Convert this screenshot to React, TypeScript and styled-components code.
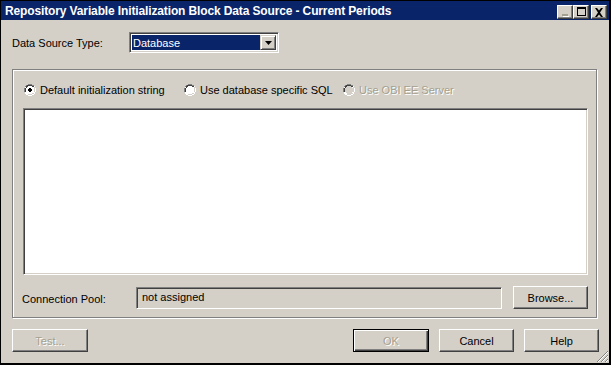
import React from 'react';
import styled, { createGlobalStyle, css } from 'styled-components';

const Global = createGlobalStyle`
  html, body { margin: 0; padding: 0; background: #d4d0c8; }
  body { font-family: "Liberation Sans", Arial, sans-serif; font-size: 11px; color: #000; }
  * { box-sizing: border-box; }
`;

const Window = styled.div`
  position: relative;
  width: 611px;
  height: 365px;
  background: #d4d0c8;
  border: 1px solid #000;
  border-right-width: 2px;
  border-bottom-width: 2px;
  display: flex;
  flex-direction: column;
  overflow: hidden;
`;

const TitleBar = styled.div`
  height: 19px;
  background: #0a246a;
  display: flex;
  align-items: center;
  justify-content: space-between;
  padding: 0 2px 0 4px;
`;

const TitleText = styled.div`
  color: #fff;
  font-weight: bold;
  font-size: 12px;
  letter-spacing: -0.13px;
  white-space: nowrap;
  margin-top: 1px;
`;

const TitleButtons = styled.div`
  display: flex;
  align-items: center;
  margin-top: 3px;
`;

const TitleBtn = styled.div<{ $gap?: boolean }>`
  width: 16px;
  height: 14px;
  background: #d4d0c8;
  border: 1px solid;
  border-color: #fff #404040 #404040 #fff;
  box-shadow: inset -1px -1px 0 #808080;
  display: flex;
  align-items: center;
  justify-content: center;
  margin-left: ${p => (p.$gap ? '2px' : '0')};
`;

const Body = styled.div`
  flex: 1;
  display: flex;
  flex-direction: column;
  padding: 12px 11px 0 11px;
`;

const TopRow = styled.div`
  display: flex;
  align-items: center;
  height: 21px;
`;

const Label = styled.div<{ $w: number }>`
  width: ${p => p.$w}px;
  white-space: nowrap;
`;

const Sunken = css`
  border: 1px solid;
  border-color: #808080 #fff #fff #808080;
  box-shadow: inset 1px 1px 0 #404040, inset -1px -1px 0 #d4d0c8;
`;

const Select = styled.div`
  ${Sunken};
  width: 150px;
  height: 21px;
  background: #fff;
  display: flex;
  padding: 2px;
`;

const SelectValue = styled.div`
  flex: 1;
  background: #0a246a;
  color: #fff;
  padding-left: 1px;
  display: flex;
  align-items: center;
`;

const SelectArrow = styled.div`
  width: 16px;
  height: 15px;
  background: #d4d0c8;
  border: 1px solid;
  border-color: #d4d0c8 #404040 #404040 #d4d0c8;
  box-shadow: inset 1px 1px 0 #fff, inset -1px -1px 0 #808080;
  display: flex;
  align-items: center;
  justify-content: center;
`;

const Group = styled.div`
  margin-top: 16px;
  width: 585px;
  height: 249px;
  border: 1px solid #808080;
  box-shadow: inset 1px 1px 0 #fff, 1px 1px 0 #fff;
  padding: 13px 8px 0 10px;
  display: flex;
  flex-direction: column;
`;

const RadioRow = styled.div`
  display: grid;
  grid-template-columns: 160px 159px 160px;
  height: 13px;
  margin-left: 1px;
`;

const RadioOption = styled.div<{ $disabled?: boolean }>`
  display: flex;
  align-items: center;
  gap: 4px;
  white-space: nowrap;
  color: ${p => (p.$disabled ? '#a4a090' : '#000')};
  text-shadow: ${p => (p.$disabled ? '1px 1px 0 #fff' : 'none')};
`;

const TextArea = styled.div`
  ${Sunken};
  margin-top: 12px;
  width: 565px;
  height: 167px;
  background: #fff;
`;

const PoolRow = styled.div`
  margin-top: 11px;
  height: 23px;
  display: flex;
  align-items: center;
`;

const PoolLabel = styled.div`
  width: 114px;
  margin-left: -1px;
  margin-top: 2px;
  white-space: nowrap;
`;

const Field = styled.div`
  ${Sunken};
  width: 366px;
  height: 22px;
  background: #d4d0c8;
  padding: 3px 5px 0 5px;
  white-space: nowrap;
`;

const Button = styled.div<{ $disabled?: boolean; $default?: boolean; $w?: number }>`
  width: ${p => p.$w ?? 75}px;
  height: 23px;
  background: #d4d0c8;
  display: flex;
  align-items: center;
  justify-content: center;
  white-space: nowrap;
  border: 1px solid;
  ${p =>
    p.$default
      ? css`
          border-color: #000;
          box-shadow: inset 1px 1px 0 #fff, inset -1px -1px 0 #404040, inset -2px -2px 0 #808080;
        `
      : css`
          border-color: #fff #404040 #404040 #fff;
          box-shadow: inset -1px -1px 0 #808080;
        `}
  color: ${p => (p.$disabled ? '#a4a090' : '#000')};
  text-shadow: ${p => (p.$disabled ? '1px 1px 0 #fff' : 'none')};
`;

const BrowseButton = styled(Button)`
  margin-left: 11px;
`;

const ButtonRow = styled.div`
  margin-top: 11px;
  display: flex;
  align-items: center;
  gap: 10px;
  width: 587px;
`;

const Spacer = styled.div`
  flex: 1;
`;

const Grip = styled.svg`
  position: absolute;
  right: 0;
  bottom: 0;
`;

const Radio: React.FC<{ checked?: boolean; disabled?: boolean }> = ({ checked, disabled }) => (
  <svg width="12" height="12" viewBox="0 0 12 12">
    <path d="M4 0h4v1h2v1h1v2h1v4h-1v2h-1v1h-2v1h-4v-1h-2v-1h-1v-2h-1v-4h1v-2h1v-1h2z" fill="#fff" />
    <path d="M4 0h4v1h2v1h-2v-1h-4v1h-2v1h-1v1h0v4h-1v-4h1v-2h1v-1h2z" fill="#808080" />
    <path d="M4 1h4v1h2v1h-2v-1h-4v1h-1v1h-1v4h-1v-4h1v-2h1v-1z" fill="#404040" />
    <path d="M10 3h1v1h-0v4h-1v2h-2v1h-4v-1h4v-1h2z" fill="#d4d0c8" />
    <rect x="3" y="3" width="6" height="6" fill={disabled ? '#d4d0c8' : '#fff'} />
    <rect x="2" y="4" width="8" height="4" fill={disabled ? '#d4d0c8' : '#fff'} />
    <rect x="4" y="2" width="4" height="8" fill={disabled ? '#d4d0c8' : '#fff'} />
    {checked && <path d="M5 4h2v1h1v2h-1v1h-2v-1h-1v-2h1z" fill="#000" />}
  </svg>
);

export default function App() {
  return (
    <>
      <Global />
      <Window>
        <TitleBar>
          <TitleText>Repository Variable Initialization Block Data Source - Current Periods</TitleText>
          <TitleButtons>
            <TitleBtn>
              <svg width="10" height="10" viewBox="0 0 10 10">
                <rect x="2" y="7" width="6" height="2" fill="#a4a090" />
                <rect x="3" y="9" width="6" height="1" fill="#fff" />
              </svg>
            </TitleBtn>
            <TitleBtn>
              <svg width="10" height="10" viewBox="0 0 10 10">
                <path d="M1 0h9v9h-9zM2 2v6h7v-6z" fill="#000" />
              </svg>
            </TitleBtn>
            <TitleBtn $gap>
              <svg width="10" height="9" viewBox="0 0 10 9">
                <path d="M1 0h2l2 2.5l2-2.5h2l-3 4.5l3 4.5h-2l-2-2.5l-2 2.5h-2l3-4.5z" fill="#000" />
              </svg>
            </TitleBtn>
          </TitleButtons>
        </TitleBar>
        <Body>
          <TopRow>
            <Label $w={117}>Data Source Type:</Label>
            <Select>
              <SelectValue>Database</SelectValue>
              <SelectArrow>
                <svg width="7" height="4" viewBox="0 0 7 4">
                  <path d="M0 0h7l-3.5 4z" fill="#000" />
                </svg>
              </SelectArrow>
            </Select>
          </TopRow>
          <Group>
            <RadioRow>
              <RadioOption>
                <Radio checked />
                Default initialization string
              </RadioOption>
              <RadioOption>
                <Radio />
                Use database specific SQL
              </RadioOption>
              <RadioOption $disabled>
                <Radio disabled />
                Use OBI EE Server
              </RadioOption>
            </RadioRow>
            <TextArea />
            <PoolRow>
              <PoolLabel>Connection Pool:</PoolLabel>
              <Field>not assigned</Field>
              <BrowseButton>Browse...</BrowseButton>
            </PoolRow>
          </Group>
          <ButtonRow>
            <Button $disabled $w={76}>Test...</Button>
            <Spacer />
            <Button $default $disabled $w={76}>OK</Button>
            <Button>Cancel</Button>
            <Button>Help</Button>
          </ButtonRow>
        </Body>
        <Grip width="13" height="13" viewBox="0 0 13 13">
          <path d="M12 1L1 12M12 5L5 12M12 9L9 12" stroke="#808080" strokeWidth="1" />
          <path d="M12 2L2 12M12 6L6 12M12 10L10 12" stroke="#fff" strokeWidth="1" />
        </Grip>
      </Window>
    </>
  );
}
